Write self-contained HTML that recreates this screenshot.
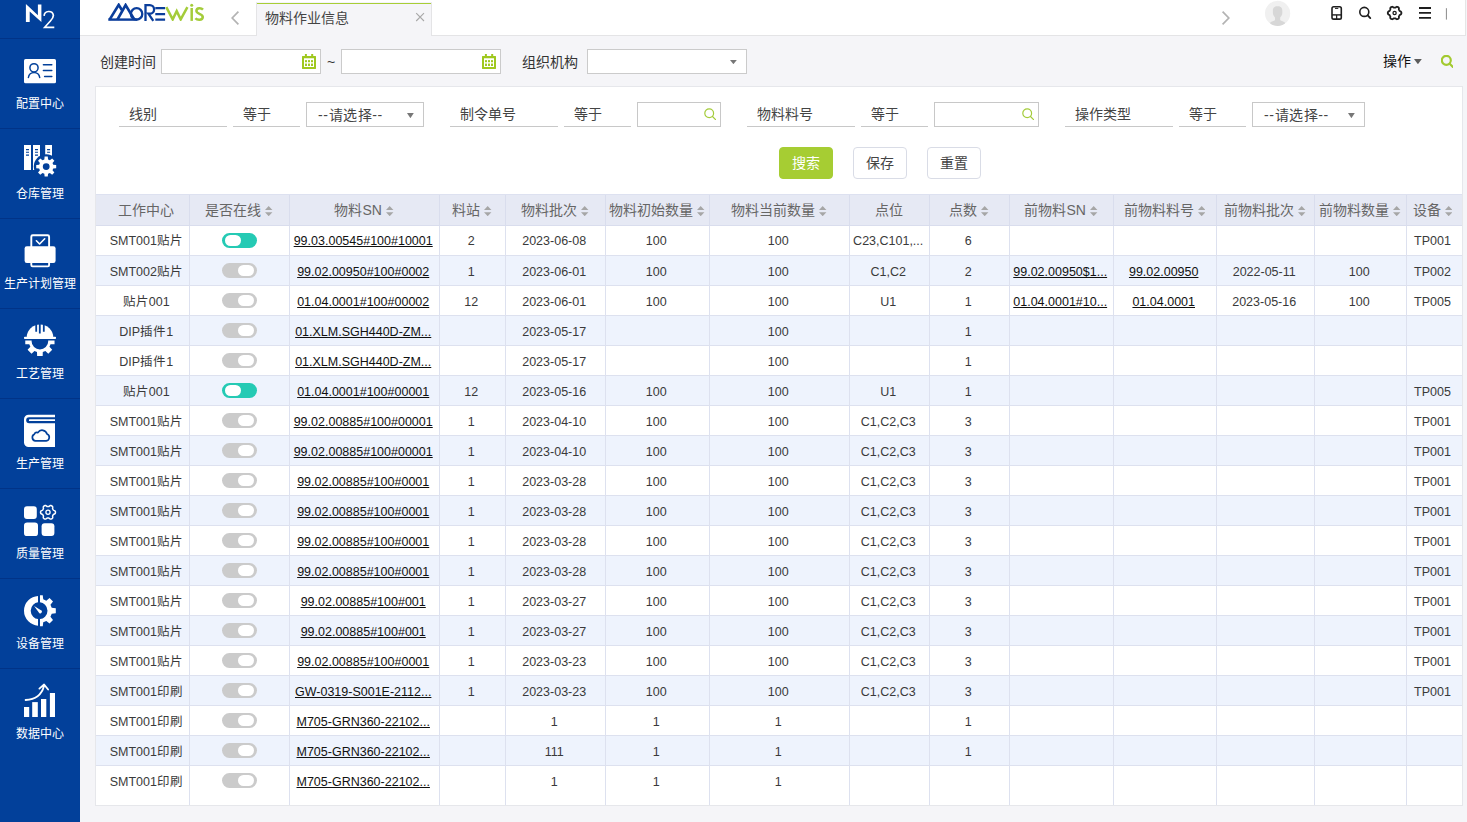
<!DOCTYPE html>
<html lang="zh-CN">
<head>
<meta charset="utf-8">
<title>物料作业信息</title>
<style>
*{box-sizing:border-box;margin:0;padding:0}
html,body{width:1467px;height:822px;overflow:hidden}
body{position:relative;background:#f5f5f8;font-family:"Liberation Sans",sans-serif;font-size:14px;color:#333}
.abs{position:absolute}
/* sidebar */
#side{position:absolute;left:0;top:0;width:80px;height:822px;background:#02409a}
#side .sep{position:absolute;left:0;width:80px;height:1px;background:#013387}
#side .lb{position:absolute;left:-10px;width:100px;text-align:center;color:#fff;font-size:12px;line-height:14px;font-weight:500;white-space:nowrap}
#side svg{position:absolute;left:0;overflow:visible}
/* top bar */
#top{position:absolute;left:80px;top:0;width:1386px;height:36px;background:#fff;border-right:1px solid #e6e6e6;border-bottom:1px solid #e4e4e6}
#tab{position:absolute;left:176px;top:2px;width:176px;height:34px;background:#f5f5f8;border-top:1px solid #f3f3fa;border-left:1px solid #e4e4e6;border-right:1px solid #e4e4e6}
#tab:before{content:"";position:absolute;left:0;right:0;top:0;height:1px;background:#a8ce35}
#tab span{position:absolute;left:8px;top:6px;font-size:14px;line-height:18px;color:#444}
/* filter bar */
.lab{position:absolute;font-size:14px;line-height:18px;color:#333;white-space:nowrap}
.inp{position:absolute;background:#fff;border:1px solid #cbcbcb}
/* panel */
#panel{position:absolute;left:95px;top:86px;width:1368px;height:720px;background:#fff;border:1px solid #e6e7eb}
.fl{position:absolute;top:102px;height:25px;border-bottom:1px solid #c8c8c8;font-size:14px;line-height:25px;color:#444;padding-left:10px;white-space:nowrap}
.fv{letter-spacing:.6px;position:absolute;top:102px;height:25px;background:#fff;border:1px solid #c8c8c8;font-size:14px;line-height:25px;color:#444;padding-left:11px;white-space:nowrap}
.tri{position:absolute;width:0;height:0;border-left:3.5px solid transparent;border-right:3.5px solid transparent;border-top:5px solid #777}
.btn{position:absolute;top:147px;width:54px;height:32px;border-radius:4px;font-size:14px;line-height:30px;text-align:center;border:1px solid #d9dce6;background:#fff;color:#444}
.btn.g{background:#a6cd33;border-color:#a6cd33;color:#fff}
/* table */
#tw{position:absolute;left:96px;top:194px;width:1366px;height:611px;overflow:hidden}
#tw:before{content:"";position:absolute;left:0;top:0;width:100%;height:1px;background:#dde1f0}
#tb{border-collapse:collapse;table-layout:fixed;width:1366px;font-size:12.5px;color:#3a3a3a}
#tb th{height:31px;background:#e6e9f4;border-right:1px solid #d9dded;border-bottom:1px solid #d9dded;font-weight:normal;font-size:14px;color:#666;text-align:center;white-space:nowrap;padding:0;overflow:hidden}
#tb th span{vertical-align:middle}
#tb td{height:30px;border-right:1px solid #dde1ef;border-bottom:1px solid #dde1ef;text-align:center;white-space:nowrap;overflow:hidden;padding:2px 1.6px 0 0;line-height:16px}
#tb tbody tr:nth-child(even) td{background:#eef3fd}
#tb tbody tr+tr td{padding-top:4px}
#tb tbody tr td:nth-child(2){padding-top:2px;padding-right:0}
#tb tbody tr:last-child td{height:40px;border-bottom:0;padding-bottom:10px}
#tb th:first-child{padding-left:8px}
#tb td:first-child{padding-left:9.6px}
#tb th:nth-child(14),#tb td:nth-child(14),#tb th:nth-child(15),#tb td:nth-child(15){border-right:0}
#tb th:nth-child(14){padding-left:1.4px}
#tb td:nth-child(14){padding-left:1.4px;padding-right:0}
#tb a{color:#111;text-decoration:underline}
.so{display:inline-block;vertical-align:middle;position:relative;top:2px;margin-left:4.3px;fill:#a6a6a6}
.sw{display:inline-block;vertical-align:middle;position:relative;top:-1px;width:35px;height:15px;border-radius:8px;background:#cbcbcb}
.sw u{position:absolute;top:2px;left:16px;width:16px;height:11px;border-radius:6px;background:#fff}
.sw.on{background:#25cab4}
.sw.on u{left:3px}
</style>
</head>
<body>
<div id="side">
<svg width="80" height="822" viewBox="0 0 80 822" style="top:0">
<path fill="#fff" d="M25.9 22.1V4.1L37.9 15.2V4.4H41.4V22.1L29.7 11.6V22.1Z"/>
<path fill="none" stroke="#fff" stroke-width="1.7" d="M44.1 15.9A4.7 4.7 0 0 1 53.4 15.3Q53.4 17.8 50.4 21L44.7 27.3H54.3"/>
<rect x="24" y="59" width="32" height="24.3" rx="1.6" fill="#fff"/>
<g fill="none" stroke="#02409a" stroke-width="1.5" stroke-linecap="round"><circle cx="34" cy="67.8" r="4.1"/><path d="M28.4 77.5A5.7 5.9 0 0 1 39.7 77.5"/><path d="M43.4 64.8H51.8M43.4 70.6H51.8M44.6 76.5H51.8"/></g>
<g fill="#fff"><rect x="24" y="145" width="7" height="25"/><rect x="33" y="145" width="7" height="25"/><rect x="45.2" y="145" width="6.8" height="12"/></g>
<path stroke="#02409a" stroke-width="1.1" d="M26 149.6h3M26 152.3h3M26 155.1h3M35 149.6h3M35 152.3h3M35 155.1h3M47.1 149.6h3M47.1 152.3h3"/>
<circle cx="46.2" cy="166.6" r="12.4" fill="#02409a"/>
<path fill="#fff" fill-rule="evenodd" d="M53.26 164.73 L56.18 165.02 L56.18 168.18 L53.26 168.47 L52.51 170.27 L54.37 172.54 L52.14 174.77 L49.87 172.91 L48.07 173.66 L47.78 176.58 L44.62 176.58 L44.33 173.66 L42.53 172.91 L40.26 174.77 L38.03 172.54 L39.89 170.27 L39.14 168.47 L36.22 168.18 L36.22 165.02 L39.14 164.73 L39.89 162.93 L38.03 160.66 L40.26 158.43 L42.53 160.29 L44.33 159.54 L44.62 156.62 L47.78 156.62 L48.07 159.54 L49.87 160.29 L52.14 158.43 L54.37 160.66 L52.51 162.93Z M42.80 166.60 a3.40 3.40 0 1 0 6.80 0 a3.40 3.40 0 1 0 -6.80 0Z"/>
<rect x="31.3" y="235.3" width="17.8" height="13" rx="1.4" fill="none" stroke="#fff" stroke-width="1.9"/>
<rect x="24.6" y="246.3" width="31" height="16.7" rx="2.2" fill="#fff"/>
<rect x="31.3" y="260" width="17.8" height="6.4" rx="1.3" fill="none" stroke="#fff" stroke-width="1.9"/>
<path d="M36.4 240.8L39.6 244L44.7 238.8" fill="none" stroke="#fff" stroke-width="1.6" stroke-linecap="round" stroke-linejoin="round"/>
<path fill="#fff" d="M26.8 337A13.2 12.4 0 0 1 53.2 337Z"/>
<path stroke="#02409a" stroke-width="1.8" d="M36.2 324v7.8M39.8 324v9.4M43.8 324v7.8"/>
<rect x="24" y="336.8" width="32" height="2.3" rx="0.8" fill="#fff"/>
<clipPath id="c3"><rect x="20" y="340.6" width="40" height="20"/></clipPath>
<path clip-path="url(#c3)" fill="#fff" fill-rule="evenodd" d="M50.51 338.50 L54.54 338.61 L54.54 344.19 L50.51 344.30 L49.45 346.85 L52.22 349.78 L48.28 353.72 L45.35 350.95 L42.80 352.01 L42.69 356.04 L37.11 356.04 L37.00 352.01 L34.45 350.95 L31.52 353.72 L27.58 349.78 L30.35 346.85 L29.29 344.30 L25.26 344.19 L25.26 338.61 L29.29 338.50 L30.35 335.95 L27.58 333.02 L31.52 329.08 L34.45 331.85 L37.00 330.79 L37.11 326.76 L42.69 326.76 L42.80 330.79 L45.35 331.85 L48.28 329.08 L52.22 333.02 L49.45 335.95Z M31.60 341.20 a8.30 8.30 0 1 0 16.60 0 a8.30 8.30 0 1 0 -16.60 0Z"/>
<path fill="#fff" d="M55 414.7H28.6A4.6 4.6 0 0 0 24 419.3V442.4A4.6 4.6 0 0 0 28.6 447H55Z"/>
<path fill="#02409a" d="M55.5 417.2H29.2A3.05 3.05 0 0 0 29.2 423.3H55.5Z"/>
<path fill="#fff" d="M55 419.3H29.8A0.9 0.9 0 0 0 29.8 421.1H55Z"/>
<path fill="none" stroke="#02409a" stroke-width="1.7" stroke-linejoin="round" d="M35.4 440.9H46.2A3.6 3.6 0 0 0 47 434A5 5 0 0 0 37.9 432.6A2.9 2.9 0 0 0 34.3 434.3A3.5 3.5 0 0 0 35.4 440.9Z"/>
<g fill="#fff"><rect x="24" y="506.3" width="12.8" height="12.7" rx="3"/><rect x="24" y="522.4" width="14" height="13.7" rx="3.2"/><rect x="41.6" y="523.3" width="12.8" height="12.7" rx="3"/></g>
<path fill="none" stroke="#fff" stroke-width="1.5" stroke-linejoin="round" d="M55.45 512.30 L55.43 512.69 L55.36 513.07 L55.21 513.44 L54.90 513.77 L54.38 514.01 L53.85 514.20 L53.50 514.41 L53.29 514.66 L53.13 514.91 L52.98 515.17 L52.83 515.44 L52.69 515.71 L52.58 516.01 L52.57 516.41 L52.67 516.97 L52.72 517.54 L52.60 517.98 L52.35 518.29 L52.05 518.54 L51.73 518.75 L51.38 518.93 L51.01 519.06 L50.62 519.12 L50.18 519.01 L49.71 518.68 L49.28 518.31 L48.92 518.12 L48.61 518.06 L48.30 518.05 L48.00 518.05 L47.70 518.05 L47.39 518.06 L47.08 518.12 L46.72 518.31 L46.29 518.68 L45.82 519.01 L45.38 519.12 L44.99 519.06 L44.62 518.93 L44.28 518.75 L43.95 518.54 L43.65 518.29 L43.40 517.98 L43.28 517.54 L43.33 516.97 L43.43 516.41 L43.42 516.01 L43.31 515.71 L43.17 515.44 L43.02 515.17 L42.87 514.91 L42.71 514.66 L42.50 514.41 L42.15 514.20 L41.62 514.01 L41.10 513.77 L40.79 513.44 L40.64 513.07 L40.57 512.69 L40.55 512.30 L40.57 511.91 L40.64 511.53 L40.79 511.16 L41.10 510.83 L41.62 510.59 L42.15 510.40 L42.50 510.19 L42.71 509.94 L42.87 509.69 L43.02 509.42 L43.17 509.16 L43.31 508.89 L43.42 508.59 L43.43 508.19 L43.33 507.63 L43.28 507.06 L43.40 506.62 L43.65 506.31 L43.95 506.06 L44.27 505.85 L44.62 505.67 L44.99 505.54 L45.38 505.48 L45.82 505.59 L46.29 505.92 L46.72 506.29 L47.08 506.48 L47.39 506.54 L47.70 506.55 L48.00 506.55 L48.30 506.55 L48.61 506.54 L48.92 506.48 L49.28 506.29 L49.71 505.92 L50.18 505.59 L50.62 505.48 L51.01 505.54 L51.38 505.67 L51.73 505.85 L52.05 506.06 L52.35 506.31 L52.60 506.62 L52.72 507.06 L52.67 507.63 L52.57 508.19 L52.58 508.59 L52.69 508.89 L52.83 509.16 L52.98 509.42 L53.13 509.69 L53.29 509.94 L53.50 510.19 L53.85 510.40 L54.38 510.59 L54.90 510.83 L55.21 511.16 L55.36 511.53 L55.43 511.91Z"/>
<circle cx="48" cy="512.3" r="2.1" fill="none" stroke="#fff" stroke-width="1.3"/>
<clipPath id="c6a"><rect x="20" y="590" width="18.1" height="42"/></clipPath>
<path clip-path="url(#c6a)" fill="#fff" fill-rule="evenodd" d="M24.00 610.80 a14.90 14.90 0 1 0 29.80 0 a14.90 14.90 0 1 0 -29.80 0Z M30.70 610.70 a8.40 8.40 0 1 0 16.80 0 a8.40 8.40 0 1 0 -16.80 0Z"/>
<clipPath id="c6"><rect x="39.9" y="590" width="25" height="42"/></clipPath>
<path clip-path="url(#c6)" fill="#fff" fill-rule="evenodd" d="M51.73 607.87 L55.81 608.34 L55.81 613.26 L51.73 613.73 L50.46 616.81 L53.00 620.03 L49.53 623.50 L46.31 620.96 L43.23 622.23 L42.76 626.31 L37.84 626.31 L37.37 622.23 L34.29 620.96 L31.07 623.50 L27.60 620.03 L30.14 616.81 L28.87 613.73 L24.79 613.26 L24.79 608.34 L28.87 607.87 L30.14 604.79 L27.60 601.57 L31.07 598.10 L34.29 600.64 L37.37 599.37 L37.84 595.29 L42.76 595.29 L43.23 599.37 L46.31 600.64 L49.53 598.10 L53.00 601.57 L50.46 604.79Z M30.70 610.70 a8.40 8.40 0 1 0 16.80 0 a8.40 8.40 0 1 0 -16.80 0Z"/>
<path fill="#fff" d="M34.1 606.1L41.4 610.5A1.6 1.6 0 0 1 39.2 612.9Z"/>
<g fill="#fff"><rect x="24" y="707" width="5.2" height="10"/><rect x="32.2" y="702.1" width="5.6" height="14.9"/><rect x="41" y="699" width="5.3" height="18"/><rect x="49.9" y="693" width="5.1" height="24"/></g>
<path fill="none" stroke="#fff" stroke-width="1.8" stroke-linecap="round" stroke-linejoin="round" d="M25.6 700Q40.5 699.3 44 686M39.4 688.6L44.1 684.5L48.1 689.5"/>
</svg>
<div class="sep" style="top:38px"></div>
<div class="sep" style="top:128px"></div>
<div class="sep" style="top:218px"></div>
<div class="sep" style="top:308px"></div>
<div class="sep" style="top:398px"></div>
<div class="sep" style="top:488px"></div>
<div class="sep" style="top:578px"></div>
<div class="sep" style="top:668px"></div>
<div class="lb" style="top:97.0px">配置中心</div>
<div class="lb" style="top:187.0px">仓库管理</div>
<div class="lb" style="top:277.0px">生产计划管理</div>
<div class="lb" style="top:367.0px">工艺管理</div>
<div class="lb" style="top:457.0px">生产管理</div>
<div class="lb" style="top:547.0px">质量管理</div>
<div class="lb" style="top:637.0px">设备管理</div>
<div class="lb" style="top:727.0px">数据中心</div>
</div><div id="top">
<div id="tab"><span>物料作业信息</span></div>
<svg class="abs" style="left:0;top:0" width="1386" height="36" viewBox="80 0 1386 36">
<g fill="none" stroke="#0a3d9b" stroke-width="2.3" stroke-linejoin="miter">
<clipPath id="lg"><rect x="100" y="3" width="110" height="17.9"/></clipPath>
<g clip-path="url(#lg)" stroke-width="2.7"><path d="M109.6 19.6L118.7 4.9L121.9 10"/>
<path d="M117.4 19.6L125.6 5.1L134.4 19.6"/>
<path d="M108.3 19.6H137.3" stroke-width="2.4"/></g>
<circle cx="136.6" cy="13.9" r="5.7"/>
<path d="M145.5 20.9V5.1H149.8A4.3 4.3 0 0 1 149.8 13.7H148.4L153.3 20.9"/>
<path d="M155.3 8.2H165.1M155.3 14.1H165.1M155.3 19.6H165.1"/>
</g>
<g fill="none" stroke="#a4cc3a" stroke-width="2.5">
<path clip-path="url(#lg)" d="M166.3 7.2L172.7 19.4L176.7 11.2L180.7 19.4L187.4 7.2" stroke-linejoin="miter"/>
<path d="M191.7 8V20.9"/>
<path d="M203 9.6C201.3 7.8 196.6 7.4 196.4 10.9C196.3 14.2 203 13.4 202.8 17.2C202.5 20.6 197.2 20.4 195.4 18.2"/>
</g>
<circle cx="191.7" cy="5.3" r="1.5" fill="#a4cc3a"/>
<path d="M238.4 11.6L232.2 18L238.4 24.4M1222.6 11.6L1228.8 18L1222.6 24.4" fill="none" stroke="#b3b3b3" stroke-width="1.7"/>
<path d="M416.2 13.2L424 21M424 13.2L416.2 21" fill="none" stroke="#a8a8a8" stroke-width="1.1"/>
<clipPath id="av"><circle cx="1277.6" cy="13.4" r="12.6"/></clipPath>
<circle cx="1277.6" cy="13.4" r="12.6" fill="#f0f0f0"/>
<path clip-path="url(#av)" fill="#d7d7d7" d="M1277.6 6.3C1281 6.3 1282.3 8.2 1282.3 10.5V13.2C1282.3 15.2 1280.8 16.4 1280.2 17.6V20.2C1282 21.2 1285 21.6 1285.2 23.4C1284 25.6 1279.5 26 1277.6 26C1275.700 26 1271.2 25.6 1270 23.4C1270.2 21.6 1273.2 21.2 1275 20.2V17.6C1274.400 16.4 1272.9 15.2 1272.9 13.2V10.5C1272.9 8.2 1274.200 6.3 1277.6 6.3Z"/>
<g fill="none" stroke="#1e1e1e" stroke-width="1.6"><rect x="1332" y="6.8" width="9.3" height="12.3" rx="1.7"/><path d="M1332 14.9H1341.3" stroke-width="1.4"/><path d="M1336.65 15V19" stroke-width="1.2"/><path d="M1335.4 8.4H1337.9" stroke-width="1" stroke-linecap="round"/></g>
<g fill="none" stroke="#1e1e1e" stroke-width="1.6" stroke-linecap="round"><circle cx="1364.3" cy="11.9" r="4.5"/><path d="M1367.7 15.3L1370.3 18.1" stroke-width="1.8"/></g>
<path fill="none" stroke="#1e1e1e" stroke-width="1.8" stroke-linejoin="round" d="M1401.40 13.00 L1401.39 13.30 L1401.35 13.59 L1401.27 13.88 L1401.13 14.15 L1400.87 14.39 L1400.49 14.58 L1400.11 14.74 L1399.83 14.91 L1399.65 15.09 L1399.52 15.29 L1399.39 15.50 L1399.28 15.70 L1399.16 15.90 L1399.04 16.11 L1398.94 16.33 L1398.87 16.58 L1398.86 16.90 L1398.91 17.31 L1398.94 17.73 L1398.86 18.08 L1398.70 18.34 L1398.49 18.55 L1398.25 18.73 L1398.00 18.89 L1397.74 19.03 L1397.46 19.14 L1397.18 19.22 L1396.87 19.23 L1396.53 19.12 L1396.18 18.89 L1395.85 18.64 L1395.57 18.49 L1395.31 18.42 L1395.07 18.40 L1394.84 18.40 L1394.60 18.40 L1394.36 18.40 L1394.13 18.40 L1393.89 18.42 L1393.63 18.49 L1393.35 18.64 L1393.02 18.89 L1392.67 19.12 L1392.33 19.23 L1392.02 19.22 L1391.74 19.14 L1391.46 19.03 L1391.20 18.89 L1390.95 18.73 L1390.71 18.55 L1390.50 18.34 L1390.34 18.08 L1390.26 17.73 L1390.29 17.31 L1390.34 16.90 L1390.33 16.58 L1390.26 16.33 L1390.16 16.11 L1390.04 15.90 L1389.92 15.70 L1389.81 15.50 L1389.68 15.29 L1389.55 15.09 L1389.37 14.91 L1389.09 14.74 L1388.71 14.58 L1388.33 14.39 L1388.07 14.15 L1387.93 13.88 L1387.85 13.59 L1387.81 13.30 L1387.80 13.00 L1387.81 12.70 L1387.85 12.41 L1387.93 12.12 L1388.07 11.85 L1388.33 11.61 L1388.71 11.42 L1389.09 11.26 L1389.37 11.09 L1389.55 10.91 L1389.68 10.71 L1389.81 10.50 L1389.92 10.30 L1390.04 10.10 L1390.16 9.89 L1390.26 9.67 L1390.33 9.42 L1390.34 9.10 L1390.29 8.69 L1390.26 8.27 L1390.34 7.92 L1390.50 7.66 L1390.71 7.45 L1390.95 7.27 L1391.20 7.11 L1391.46 6.97 L1391.74 6.86 L1392.02 6.78 L1392.33 6.77 L1392.67 6.88 L1393.02 7.11 L1393.35 7.36 L1393.63 7.51 L1393.89 7.58 L1394.13 7.60 L1394.36 7.60 L1394.60 7.60 L1394.84 7.60 L1395.07 7.60 L1395.31 7.58 L1395.57 7.51 L1395.85 7.36 L1396.18 7.11 L1396.53 6.88 L1396.87 6.77 L1397.18 6.78 L1397.46 6.86 L1397.74 6.97 L1398.00 7.11 L1398.25 7.27 L1398.49 7.45 L1398.70 7.66 L1398.86 7.92 L1398.94 8.27 L1398.91 8.69 L1398.86 9.10 L1398.87 9.42 L1398.94 9.67 L1399.04 9.89 L1399.16 10.10 L1399.28 10.30 L1399.39 10.50 L1399.52 10.71 L1399.65 10.91 L1399.83 11.09 L1400.11 11.26 L1400.49 11.42 L1400.87 11.61 L1401.13 11.85 L1401.27 12.12 L1401.35 12.41 L1401.39 12.70Z"/>
<circle cx="1394.6" cy="13" r="1.6" fill="none" stroke="#1e1e1e" stroke-width="1.3"/>
<path d="M1419 8H1431M1419 12.9H1431M1419 17.9H1431" stroke="#1e1e1e" stroke-width="1.9"/>
<path d="M1446.4 8.2V19.6" stroke="#8a8a8a" stroke-width="1"/>
</svg>
</div>
<div class="lab" style="left:100px;top:53px">创建时间</div>
<div class="inp" style="left:161px;top:49px;width:160px;height:25px"></div>
<svg class="abs" style="left:302px;top:54px" width="14" height="15" viewBox="0 0 14 15"><path fill="#9fc81f" fill-rule="evenodd" d="M0.4 2H13.6A0.4 0.4 0 0 1 14 2.4V14.6A0.4 0.4 0 0 1 13.6 15H0.4A0.4 0.4 0 0 1 0 14.6V2.4A0.4 0.4 0 0 1 0.4 2ZM2 4.2V13H12V4.2Z"/><path fill="#9fc81f" d="M2.9 0h2v3h-2zM9.2 0h2v3h-2z"/><g fill="#9fc81f"><rect x="3" y="6" width="2" height="2.2" rx=".5"/><rect x="6" y="6" width="2" height="2.2" rx=".5"/><rect x="9" y="6" width="2" height="2.2" rx=".5"/><rect x="3" y="9.6" width="2" height="2.4" rx=".5"/><rect x="6" y="9.6" width="2" height="2.4" rx=".5"/><rect x="9" y="9.6" width="2" height="2.4" rx=".5"/></g></svg>
<div class="lab" style="left:327px;top:53px">~</div>
<div class="inp" style="left:341px;top:49px;width:160px;height:25px"></div>
<svg class="abs" style="left:482px;top:54px" width="14" height="15" viewBox="0 0 14 15"><path fill="#9fc81f" fill-rule="evenodd" d="M0.4 2H13.6A0.4 0.4 0 0 1 14 2.4V14.6A0.4 0.4 0 0 1 13.6 15H0.4A0.4 0.4 0 0 1 0 14.6V2.4A0.4 0.4 0 0 1 0.4 2ZM2 4.2V13H12V4.2Z"/><path fill="#9fc81f" d="M2.9 0h2v3h-2zM9.2 0h2v3h-2z"/><g fill="#9fc81f"><rect x="3" y="6" width="2" height="2.2" rx=".5"/><rect x="6" y="6" width="2" height="2.2" rx=".5"/><rect x="9" y="6" width="2" height="2.2" rx=".5"/><rect x="3" y="9.6" width="2" height="2.4" rx=".5"/><rect x="6" y="9.6" width="2" height="2.4" rx=".5"/><rect x="9" y="9.6" width="2" height="2.4" rx=".5"/></g></svg>
<div class="lab" style="left:522px;top:53px">组织机构</div>
<div class="inp" style="left:587px;top:49px;width:160px;height:25px"></div>
<svg class="abs" style="left:730.1px;top:60.2px" width="6.8" height="4.2"><path fill="#777" d="M0 0H6.8L3.40 4.2Z"/></svg>
<div class="lab" style="left:1383px;top:52px;color:#111">操作</div>
<svg class="abs" style="left:1414.3px;top:58.6px" width="7.8" height="5.2"><path fill="#5c5c5c" d="M0 0H7.8L3.90 5.2Z"/></svg>
<svg class="abs" style="left:1440.8px;top:55.3px" width="12.7" height="12.7" viewBox="0 0 12.4 12.4"><g fill="none" stroke="#a3ca30" stroke-width="2.1" stroke-linecap="round"><circle cx="5.2" cy="5.2" r="4.4"/><path d="M8.5 8.5L11.6 11.6"/></g></svg>
<div id="panel"></div>
<div class="fl" style="left:119px;width:108px">线别</div>
<div class="fl" style="left:233px;width:67px">等于</div>
<div class="fv" style="left:306px;width:118px">--请选择--</div>
<svg class="abs" style="left:407.2px;top:113.0px" width="6.8" height="5.2"><path fill="#777" d="M0 0H6.8L3.40 5.2Z"/></svg>
<div class="fl" style="left:450px;width:108px">制令单号</div>
<div class="fl" style="left:564px;width:67px">等于</div>
<div class="fv" style="left:637px;width:84px"></div>
<svg class="abs" style="left:703.5px;top:108.0px" width="12.4" height="12.4" viewBox="0 0 12.4 12.4"><g fill="none" stroke="#a4cc3a" stroke-width="1.2" stroke-linecap="round"><circle cx="5.2" cy="5.2" r="4.4"/><path d="M8.5 8.5L11.6 11.6"/></g></svg>
<div class="fl" style="left:747px;width:108px">物料料号</div>
<div class="fl" style="left:861px;width:67px">等于</div>
<div class="fv" style="left:934px;width:105px"></div>
<svg class="abs" style="left:1021.5px;top:108.0px" width="12.4" height="12.4" viewBox="0 0 12.4 12.4"><g fill="none" stroke="#a4cc3a" stroke-width="1.2" stroke-linecap="round"><circle cx="5.2" cy="5.2" r="4.4"/><path d="M8.5 8.5L11.6 11.6"/></g></svg>
<div class="fl" style="left:1065px;width:108px">操作类型</div>
<div class="fl" style="left:1179px;width:67px">等于</div>
<div class="fv" style="left:1252px;width:113px">--请选择--</div>
<svg class="abs" style="left:1348.2px;top:113.0px" width="6.8" height="5.2"><path fill="#777" d="M0 0H6.8L3.40 5.2Z"/></svg>
<div class="btn g" style="left:779px">搜索</div>
<div class="btn" style="left:853px">保存</div>
<div class="btn" style="left:927px">重置</div><div id="tw">
<table id="tb"><colgroup><col style="width:93px"><col style="width:100px"><col style="width:150px"><col style="width:66px"><col style="width:100px"><col style="width:104px"><col style="width:140px"><col style="width:80px"><col style="width:80px"><col style="width:104px"><col style="width:103px"><col style="width:98px"><col style="width:92px"><col style="width:51px"><col style="width:5px"></colgroup>
<thead><tr><th><span>工作中心</span></th><th><span>是否在线</span><svg class="so" width="7.4" height="10.2"><path d="M0 4L3.7 0L7.4 4ZM0 6.2H7.4L3.7 10.2Z"/></svg></th><th><span>物料SN</span><svg class="so" width="7.4" height="10.2"><path d="M0 4L3.7 0L7.4 4ZM0 6.2H7.4L3.7 10.2Z"/></svg></th><th><span>料站</span><svg class="so" width="7.4" height="10.2"><path d="M0 4L3.7 0L7.4 4ZM0 6.2H7.4L3.7 10.2Z"/></svg></th><th><span>物料批次</span><svg class="so" width="7.4" height="10.2"><path d="M0 4L3.7 0L7.4 4ZM0 6.2H7.4L3.7 10.2Z"/></svg></th><th><span>物料初始数量</span><svg class="so" width="7.4" height="10.2"><path d="M0 4L3.7 0L7.4 4ZM0 6.2H7.4L3.7 10.2Z"/></svg></th><th><span>物料当前数量</span><svg class="so" width="7.4" height="10.2"><path d="M0 4L3.7 0L7.4 4ZM0 6.2H7.4L3.7 10.2Z"/></svg></th><th><span>点位</span></th><th><span>点数</span><svg class="so" width="7.4" height="10.2"><path d="M0 4L3.7 0L7.4 4ZM0 6.2H7.4L3.7 10.2Z"/></svg></th><th><span>前物料SN</span><svg class="so" width="7.4" height="10.2"><path d="M0 4L3.7 0L7.4 4ZM0 6.2H7.4L3.7 10.2Z"/></svg></th><th><span>前物料料号</span><svg class="so" width="7.4" height="10.2"><path d="M0 4L3.7 0L7.4 4ZM0 6.2H7.4L3.7 10.2Z"/></svg></th><th><span>前物料批次</span><svg class="so" width="7.4" height="10.2"><path d="M0 4L3.7 0L7.4 4ZM0 6.2H7.4L3.7 10.2Z"/></svg></th><th><span>前物料数量</span><svg class="so" width="7.4" height="10.2"><path d="M0 4L3.7 0L7.4 4ZM0 6.2H7.4L3.7 10.2Z"/></svg></th><th><span>设备</span><svg class="so" width="7.4" height="10.2"><path d="M0 4L3.7 0L7.4 4ZM0 6.2H7.4L3.7 10.2Z"/></svg></th><th></th></tr></thead><tbody>
<tr><td>SMT001贴片</td><td><b class="sw on"><u></u></b></td><td><a>99.03.00545#100#10001</a></td><td>2</td><td>2023-06-08</td><td>100</td><td>100</td><td>C23,C101,...</td><td>6</td><td></td><td></td><td></td><td></td><td>TP001</td><td></td></tr>
<tr><td>SMT002贴片</td><td><b class="sw"><u></u></b></td><td><a>99.02.00950#100#0002</a></td><td>1</td><td>2023-06-01</td><td>100</td><td>100</td><td>C1,C2</td><td>2</td><td><a>99.02.00950$1...</a></td><td><a>99.02.00950</a></td><td>2022-05-11</td><td>100</td><td>TP002</td><td></td></tr>
<tr><td>贴片001</td><td><b class="sw"><u></u></b></td><td><a>01.04.0001#100#00002</a></td><td>12</td><td>2023-06-01</td><td>100</td><td>100</td><td>U1</td><td>1</td><td><a>01.04.0001#10...</a></td><td><a>01.04.0001</a></td><td>2023-05-16</td><td>100</td><td>TP005</td><td></td></tr>
<tr><td>DIP插件1</td><td><b class="sw"><u></u></b></td><td><a>01.XLM.SGH440D-ZM...</a></td><td></td><td>2023-05-17</td><td></td><td>100</td><td></td><td>1</td><td></td><td></td><td></td><td></td><td></td><td></td></tr>
<tr><td>DIP插件1</td><td><b class="sw"><u></u></b></td><td><a>01.XLM.SGH440D-ZM...</a></td><td></td><td>2023-05-17</td><td></td><td>100</td><td></td><td>1</td><td></td><td></td><td></td><td></td><td></td><td></td></tr>
<tr><td>贴片001</td><td><b class="sw on"><u></u></b></td><td><a>01.04.0001#100#00001</a></td><td>12</td><td>2023-05-16</td><td>100</td><td>100</td><td>U1</td><td>1</td><td></td><td></td><td></td><td></td><td>TP005</td><td></td></tr>
<tr><td>SMT001贴片</td><td><b class="sw"><u></u></b></td><td><a>99.02.00885#100#00001</a></td><td>1</td><td>2023-04-10</td><td>100</td><td>100</td><td>C1,C2,C3</td><td>3</td><td></td><td></td><td></td><td></td><td>TP001</td><td></td></tr>
<tr><td>SMT001贴片</td><td><b class="sw"><u></u></b></td><td><a>99.02.00885#100#00001</a></td><td>1</td><td>2023-04-10</td><td>100</td><td>100</td><td>C1,C2,C3</td><td>3</td><td></td><td></td><td></td><td></td><td>TP001</td><td></td></tr>
<tr><td>SMT001贴片</td><td><b class="sw"><u></u></b></td><td><a>99.02.00885#100#0001</a></td><td>1</td><td>2023-03-28</td><td>100</td><td>100</td><td>C1,C2,C3</td><td>3</td><td></td><td></td><td></td><td></td><td>TP001</td><td></td></tr>
<tr><td>SMT001贴片</td><td><b class="sw"><u></u></b></td><td><a>99.02.00885#100#0001</a></td><td>1</td><td>2023-03-28</td><td>100</td><td>100</td><td>C1,C2,C3</td><td>3</td><td></td><td></td><td></td><td></td><td>TP001</td><td></td></tr>
<tr><td>SMT001贴片</td><td><b class="sw"><u></u></b></td><td><a>99.02.00885#100#0001</a></td><td>1</td><td>2023-03-28</td><td>100</td><td>100</td><td>C1,C2,C3</td><td>3</td><td></td><td></td><td></td><td></td><td>TP001</td><td></td></tr>
<tr><td>SMT001贴片</td><td><b class="sw"><u></u></b></td><td><a>99.02.00885#100#0001</a></td><td>1</td><td>2023-03-28</td><td>100</td><td>100</td><td>C1,C2,C3</td><td>3</td><td></td><td></td><td></td><td></td><td>TP001</td><td></td></tr>
<tr><td>SMT001贴片</td><td><b class="sw"><u></u></b></td><td><a>99.02.00885#100#001</a></td><td>1</td><td>2023-03-27</td><td>100</td><td>100</td><td>C1,C2,C3</td><td>3</td><td></td><td></td><td></td><td></td><td>TP001</td><td></td></tr>
<tr><td>SMT001贴片</td><td><b class="sw"><u></u></b></td><td><a>99.02.00885#100#001</a></td><td>1</td><td>2023-03-27</td><td>100</td><td>100</td><td>C1,C2,C3</td><td>3</td><td></td><td></td><td></td><td></td><td>TP001</td><td></td></tr>
<tr><td>SMT001贴片</td><td><b class="sw"><u></u></b></td><td><a>99.02.00885#100#0001</a></td><td>1</td><td>2023-03-23</td><td>100</td><td>100</td><td>C1,C2,C3</td><td>3</td><td></td><td></td><td></td><td></td><td>TP001</td><td></td></tr>
<tr><td>SMT001印刷</td><td><b class="sw"><u></u></b></td><td><a>GW-0319-S001E-2112...</a></td><td>1</td><td>2023-03-23</td><td>100</td><td>100</td><td>C1,C2,C3</td><td>3</td><td></td><td></td><td></td><td></td><td>TP001</td><td></td></tr>
<tr><td>SMT001印刷</td><td><b class="sw"><u></u></b></td><td><a>M705-GRN360-22102...</a></td><td></td><td>1</td><td>1</td><td>1</td><td></td><td>1</td><td></td><td></td><td></td><td></td><td></td><td></td></tr>
<tr><td>SMT001印刷</td><td><b class="sw"><u></u></b></td><td><a>M705-GRN360-22102...</a></td><td></td><td>111</td><td>1</td><td>1</td><td></td><td>1</td><td></td><td></td><td></td><td></td><td></td><td></td></tr>
<tr><td>SMT001印刷</td><td><b class="sw"><u></u></b></td><td><a>M705-GRN360-22102...</a></td><td></td><td>1</td><td>1</td><td>1</td><td></td><td></td><td></td><td></td><td></td><td></td><td></td><td></td></tr>
</tbody></table></div>
</body></html>
